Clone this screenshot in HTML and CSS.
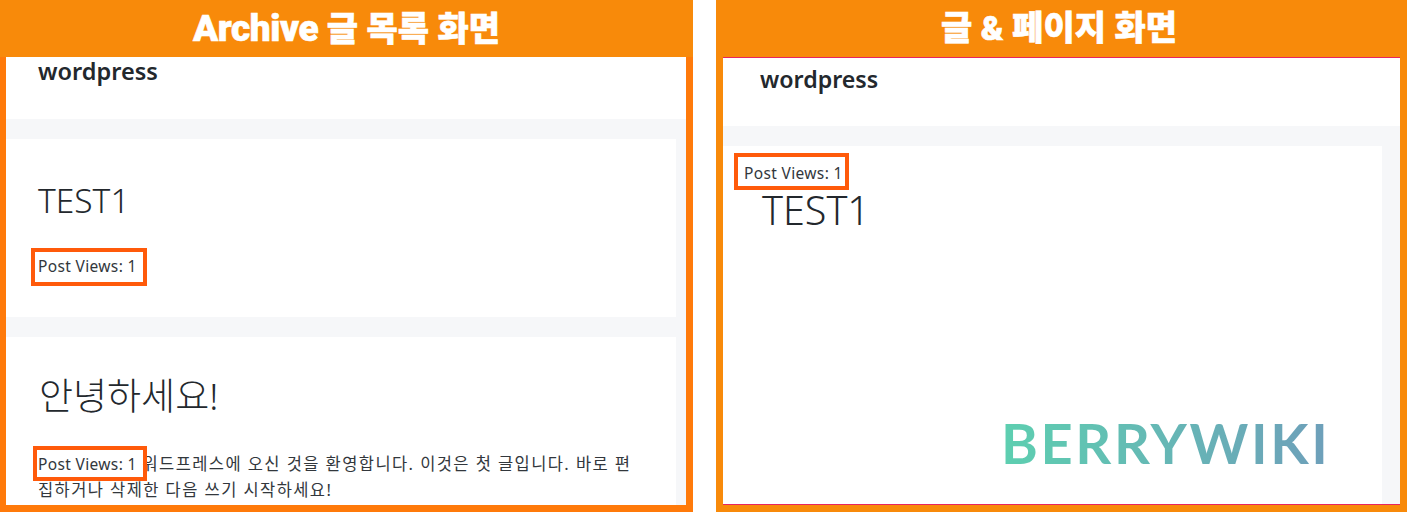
FILE: index.html
```html
<!DOCTYPE html>
<html lang="ko">
<head>
<meta charset="utf-8">
<title>Post Views</title>
<link rel="stylesheet" href="styles.css">
</head>
<body>
<div class="page">
  <section class="panel panel-left">
    <h2 class="banner"><span class="banner-text"><span class="banner-latin">Archive</span> 글 목록 화면</span></h2>
    <div class="frame frame-left">
      <header class="site site-left"><span class="brand">wordpress</span></header>
      <div class="cards cards-left">
        <article class="card card-a">
          <h1 class="title">TEST1</h1>
          <p class="excerpt"><span class="views">Post Views: 1</span></p>
        </article>
        <article class="card card-b">
          <h1 class="title title-ko">안녕하세요!</h1>
          <p class="excerpt excerpt-b"><span class="views views-tight">Post Views: 1</span> 워드프레스에 오신 것을 환영합니다. 이것은 첫 글입니다. 바로 편<br>집하거나 삭제한 다음 쓰기 시작하세요!</p>
        </article>
      </div>
    </div>
  </section>
  <section class="panel panel-right">
    <h2 class="banner banner-right"><span class="banner-text">글 &amp; 페이지 화면</span></h2>
    <div class="frame frame-right">
      <header class="site site-right"><span class="brand brand-right">wordpress</span></header>
      <div class="cards cards-right">
        <article class="card card-single">
          <p class="single-views"><span class="views views-single">Post Views: 1</span></p>
          <h1 class="title title-large">TEST1</h1>
          <div class="logo">BERRYWIKI</div>
        </article>
      </div>
    </div>
  </section>
</div>
</body>
</html>
```
FILE: styles.css
```css
* { box-sizing: border-box; }
html, body { margin: 0; padding: 0; background: #fff; }
body {
  width: 1407px;
  height: 512px;
  overflow: hidden;
  font-family: "Noto Sans", "Noto Sans CJK KR", sans-serif;
  color: #23282d;
}
.page { display: flex; gap: 23px; height: 512px; }
.panel { display: flex; flex-direction: column; height: 512px; }
.panel-left { width: 693px; }
.panel-right { width: 691px; }
.banner {
  flex: none;
  height: 57px;
  margin: 0;
  background: #f88a0a;
  display: flex;
  align-items: center;
  justify-content: center;
  color: #fff;
  font-family: Roboto, "Noto Sans CJK KR", sans-serif;
  font-weight: 900;
  font-size: 34px;
  line-height: 57px;
  -webkit-text-stroke: 0.6px #fff;
}
.banner-right { padding-right: 5px; }
.banner-text { display: block; }
.banner-latin { font-size: 37px; letter-spacing: -0.4px; }
.frame { flex: 1; display: flex; flex-direction: column; min-height: 0; border-style: solid; }
.frame-left { border-color: #ff7a0a; border-width: 0 7px 7px 6px; }
.frame-right {
  border-color: #f88a0a;
  border-width: 0 7px 7px 7px;
}
.site { flex: none; background: #fff; }
.site-left { height: 62px; padding: 2px 0 0 32px; }
.site-right { height: 69px; padding: 9px 0 0 37px; border-top: 1px solid #e8255f; }
.brand { font-size: 23.5px; line-height: 24px; font-weight: 600; color: #23282d; display: block; }
.brand-right { font-size: 23.2px; }
.cards { flex: 1; min-height: 0; background: #f6f7f9; display: flex; flex-direction: column; gap: 20px; padding-top: 20px; overflow: hidden; }
.cards-left { padding-right: 10px; }
.cards-right { padding-right: 18px; border-bottom: 1px solid #e8255f; }
.card { background: #fff; }
.card-a { flex: none; height: 178px; padding: 41px 32px 0; }
.card-b { flex: 1; padding: 39px 32px 0; overflow: hidden; }
.card-single { flex: 1; display: flex; flex-direction: column; padding: 16px 0 0 21px; }
.title { margin: 0; font-weight: 300; font-size: 33.5px; line-height: 40px; color: #23282d; }
.title-ko { font-size: 37px; margin-left: 1px; }
.excerpt { margin: 33px 0 0; font-size: 16.5px; line-height: 25px; font-weight: 400; letter-spacing: 1.42px; white-space: nowrap; color: #32373c; }
.excerpt-b { margin-top: 35px; }
.views { position: relative; display: inline-block; font-size: 15.5px; letter-spacing: 0.35px; }
.views::after {
  content: "";
  position: absolute;
  left: -7px;
  right: -10px;
  top: -6px;
  bottom: -7px;
  border: 4px solid #ff5a0a;
}
.views-tight::after { left: -5px; right: -10px; top: -6px; bottom: -4px; }
.single-views { margin: 0; font-size: 15.5px; line-height: 22px; letter-spacing: 0.35px; color: #32373c; }
.views-single::after { left: -10px; right: -6px; top: -9px; bottom: -6px; }
.title-large { font-size: 39.5px; line-height: 40px; margin: 6px 0 0 18px; }
.logo {
  margin: auto 0 38px 257px;
  font-family: Lato, "Noto Sans", sans-serif;
  font-weight: 700;
  font-size: 56px;
  line-height: 46px;
  letter-spacing: 2.6px;
  white-space: nowrap;
  width: fit-content;
  background: linear-gradient(90deg, #5dcfb0, #6e9fba);
  -webkit-background-clip: text;
  background-clip: text;
  color: transparent;
}
```
